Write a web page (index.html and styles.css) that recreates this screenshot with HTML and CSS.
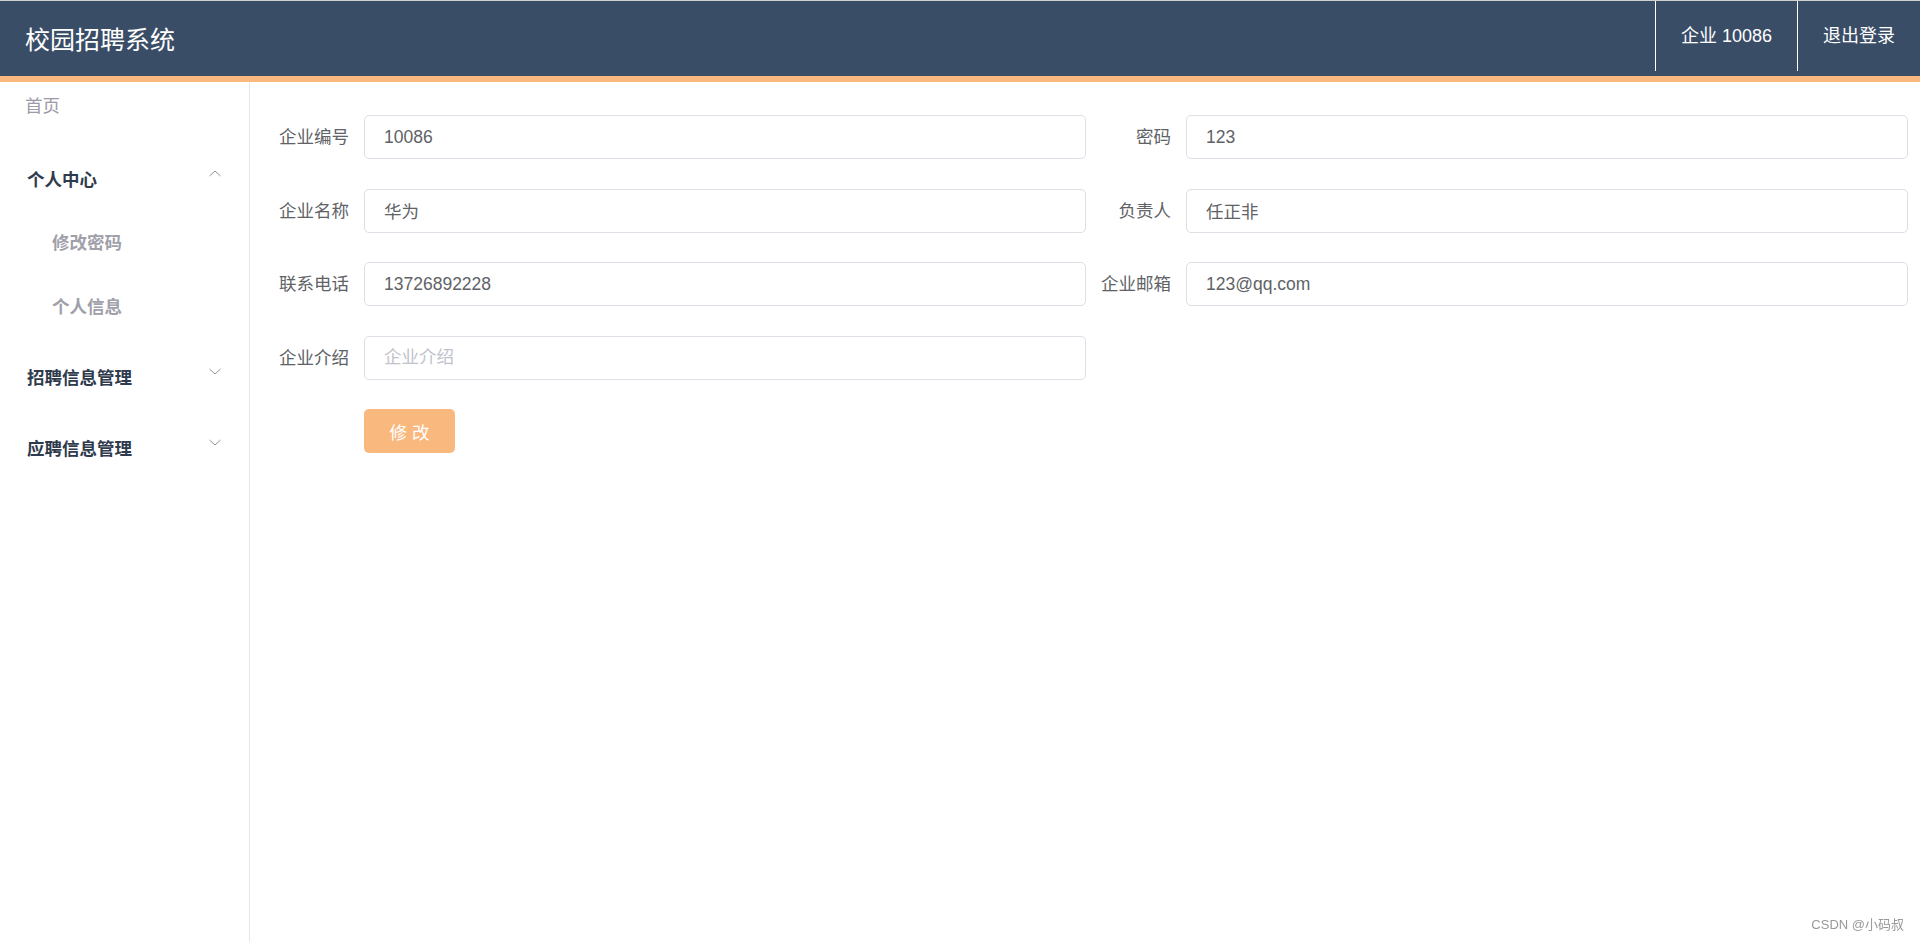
FILE: index.html
```html
<!DOCTYPE html>
<html lang="zh-CN">
<head>
    <meta charset="UTF-8">
    <meta name="viewport" content="width=device-width, initial-scale=1.0">
    <title>校园招聘系统</title>
    <link rel="stylesheet" href="styles.css">
</head>
<body>
    <div class="header">
        <div class="logo">校园招聘系统</div>
        <div class="header-right">
            <div class="header-item">企业 10086</div>
            <div class="header-item">退出登录</div>
        </div>
    </div>
    <div class="layout">
        <div class="aside">
            <div class="menu-home">首页</div>
            <div class="submenu-title first">
                <span>个人中心</span>
                <svg class="arrow" width="12" height="7" viewBox="0 0 12 7"><path d="M0.5 6 L6 1 L11.5 6" fill="none" stroke="#909399" stroke-width="1"/></svg>
            </div>
            <div class="menu-item">修改密码</div>
            <div class="menu-item">个人信息</div>
            <div class="submenu-title second">
                <span>招聘信息管理</span>
                <svg class="arrow" width="12" height="7" viewBox="0 0 12 7"><path d="M0.5 1 L6 6 L11.5 1" fill="none" stroke="#909399" stroke-width="1"/></svg>
            </div>
            <div class="submenu-title third">
                <span>应聘信息管理</span>
                <svg class="arrow" width="12" height="7" viewBox="0 0 12 7"><path d="M0.5 1 L6 6 L11.5 1" fill="none" stroke="#909399" stroke-width="1"/></svg>
            </div>
        </div>
        <div class="main">
            <div class="form">
                <div class="form-item">
                    <label>企业编号</label>
                    <input type="text" value="10086">
                </div>
                <div class="form-item">
                    <label>密码</label>
                    <input type="text" value="123">
                </div>
                <div class="form-item">
                    <label>企业名称</label>
                    <input type="text" value="华为">
                </div>
                <div class="form-item">
                    <label>负责人</label>
                    <input type="text" value="任正非">
                </div>
                <div class="form-item">
                    <label>联系电话</label>
                    <input type="text" value="13726892228">
                </div>
                <div class="form-item">
                    <label>企业邮箱</label>
                    <input type="text" value="123@qq.com">
                </div>
                <div class="form-item">
                    <label>企业介绍</label>
                    <input type="text" placeholder="企业介绍">
                </div>
                <div class="form-actions">
                    <button class="submit-button">修 改</button>
                </div>
            </div>
        </div>
    </div>
    <div class="watermark">CSDN @小码叔</div>
</body>
</html>
```

FILE: styles.css
```css
body {
    margin: 0;
    font-family: "Liberation Sans", "Noto Sans CJK SC", sans-serif;
    background: #fff;
    height: 100vh;
    overflow: hidden;
}
.header {
    height: 75px;
    background: #3a4d67;
    border-top: 1px solid #cfcfcf;
    border-bottom: 6px solid #f9b87e;
    display: flex;
    justify-content: space-between;
    align-items: flex-start;
}
.logo {
    color: #fff;
    font-size: 25px;
    line-height: 78px;
    padding-left: 25px;
}
.header-right {
    display: flex;
}
.header-item {
    color: #fff;
    font-size: 18px;
    height: 70px;
    line-height: 70px;
    padding: 0 25px;
    border-left: 1px solid #fff;
}
.layout {
    display: flex;
    height: calc(100vh - 82px);
}
.aside {
    width: 249px;
    border-right: 1px solid #e6e6e6;
    flex-shrink: 0;
}
.menu-home {
    height: 48px;
    line-height: 48px;
    padding-left: 25px;
    font-size: 17.5px;
    color: #9b9aa6;
}
.submenu-title {
    height: 71px;
    padding: 0 28px 0 27px;
    display: flex;
    justify-content: space-between;
    align-items: center;
    font-size: 17.5px;
    font-weight: bold;
    color: #2f3b4d;
}
.submenu-title.first {
    height: 65px;
    margin-top: 16px;
}
.submenu-title.second {
    margin-top: 2px;
}
.submenu-title.third {
    margin-top: 0;
}
.arrow {
    margin-top: -10px;
}
.menu-item {
    height: 64px;
    line-height: 64px;
    padding-left: 52px;
    font-size: 17.5px;
    font-weight: bold;
    color: #a0a0aa;
}
.main {
    flex: 1;
    padding: 33px 12px 0 14px;
}
.form {
    display: grid;
    grid-template-columns: 1fr 1fr;
    row-gap: 29.5px;
}
.form-item {
    display: flex;
}
.form-item label {
    width: 100px;
    box-sizing: border-box;
    padding-right: 15px;
    text-align: right;
    line-height: 44px;
    font-size: 17.5px;
    color: #606266;
    flex-shrink: 0;
}
.form-item input {
    flex: 1;
    min-width: 0;
    height: 44px;
    box-sizing: border-box;
    border: 1px solid #dcdfe6;
    border-radius: 5px;
    padding: 0 19px;
    font-family: inherit;
    font-size: 17.5px;
    color: #606266;
    outline: none;
}
.form-item input::placeholder {
    color: #c0c4cc;
}
.form-actions {
    grid-column: 1;
    padding-left: 100px;
}
.submit-button {
    width: 91px;
    height: 44px;
    border: none;
    border-radius: 5px;
    background: #f9b87e;
    color: #fff;
    font-family: inherit;
    font-size: 17.5px;
    cursor: pointer;
}
.watermark {
    position: fixed;
    right: 16px;
    bottom: 9px;
    font-size: 13px;
    color: #999;
}
```
